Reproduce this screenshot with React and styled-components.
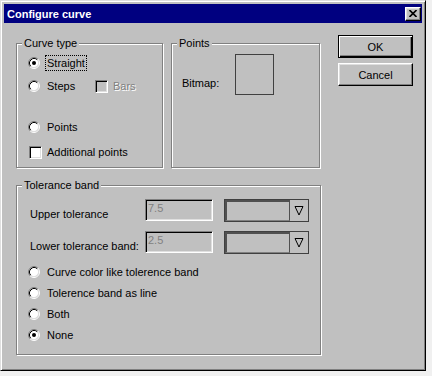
import React from "react";
import styled, { createGlobalStyle, css } from "styled-components";

const GlobalStyle = createGlobalStyle`
  body {
    margin: 0;
    background: #f0f0f0;
    font-family: "Liberation Sans", Arial, sans-serif;
    font-size: 11px;
    color: #000;
  }
`;

const Window = styled.div`
  box-sizing: border-box;
  width: 426px;
  height: 371px;
  background: #c0c0c0;
  border: 1px solid;
  border-color: #dfdfdf #000 #000 #dfdfdf;
  box-shadow: inset 1px 1px 0 #fff, inset -1px -1px 0 #808080;
  padding: 3px;
  display: flex;
  flex-direction: column;
`;

const TitleBar = styled.div`
  height: 19px;
  background: #000080;
  color: #fff;
  font-weight: bold;
  display: flex;
  align-items: center;
  justify-content: space-between;
  padding: 0 1px 0 3px;
`;

const CloseButton = styled.div`
  box-sizing: border-box;
  width: 16px;
  height: 14px;
  background: #c0c0c0;
  border: 1px solid;
  border-color: #fff #000 #000 #fff;
  box-shadow: inset -1px -1px 0 #808080, inset 1px 1px 0 #dfdfdf;
  display: flex;
  align-items: center;
  justify-content: center;
`;

const Body = styled.div`
  display: flex;
  padding: 12px 0 0 12px;
`;

const LeftColumn = styled.div`
  margin-top: 8px;
  width: 305px;
`;

const TopRow = styled.div`
  display: flex;
  gap: 8px;
`;

const Group = styled.div`
  position: relative;
  box-sizing: border-box;
  width: ${(p) => p.w}px;
  height: ${(p) => p.h}px;
  margin-top: ${(p) => p.top || 0}px;
  border: 1px solid #808080;
  box-shadow: inset 1px 1px 0 #fff, 1px 1px 0 #fff;
`;

const Legend = styled.span`
  position: absolute;
  top: -7px;
  left: 5px;
  padding: 0 2px;
  line-height: 13px;
  background: #c0c0c0;
`;

const GroupContent = styled.div`
  display: flex;
  flex-direction: column;
  padding: ${(p) => p.pad};
`;

const Row = styled.div`
  display: flex;
  align-items: center;
  height: 16px;
  margin-top: ${(p) => p.gap || 0}px;
  margin-left: ${(p) => p.indent || 0}px;
  width: ${(p) => (p.w ? `${p.w}px` : "auto")};
  flex-shrink: 0;
`;

const Label = styled.span`
  margin-left: ${(p) => p.gap ?? 5}px;
  padding: 0 1px;
  line-height: 14px;
  white-space: nowrap;
  border: 1px ${(p) => (p.focus ? "dotted #000" : "solid transparent")};
  ${(p) =>
    p.disabled &&
    css`
      color: #808080;
      text-shadow: 1px 1px 0 #fff;
    `}
`;

const RadioSvg = styled.svg`
  flex-shrink: 0;
  display: block;
`;

const CheckBox = styled.div`
  box-sizing: border-box;
  flex-shrink: 0;
  width: 13px;
  height: 13px;
  border: 1px solid;
  border-color: #808080 #fff #fff #808080;
  box-shadow: inset 1px 1px 0 #000, inset -1px -1px 0 #dfdfdf;
  background: ${(p) => (p.disabled ? "#c0c0c0" : "#fff")};
`;

const BitmapRow = styled.div`
  display: flex;
  align-items: flex-start;
  padding: 10px 0 0 10px;
`;

const BitmapLabel = styled.span`
  width: 53px;
  margin-top: 23px;
  line-height: 13px;
`;

const BitmapBox = styled.div`
  box-sizing: border-box;
  width: 39px;
  height: 41px;
  border: 1px solid #404040;
`;

const FieldGrid = styled.div`
  display: grid;
  grid-template-columns: 115px 79px 85px;
  grid-auto-rows: 22px;
  row-gap: 10px;
`;

const FieldLabel = styled.span`
  margin-top: 9px;
  line-height: 13px;
  white-space: nowrap;
`;

const Input = styled.div`
  box-sizing: border-box;
  width: 68px;
  height: 22px;
  border: 1px solid;
  border-color: #808080 #fff #fff #808080;
  box-shadow: inset 1px 1px 0 #000, inset -1px -1px 0 #dfdfdf;
  background: #c0c0c0;
  color: #808080;
  padding: 2px 0 0 2px;
  line-height: 13px;
`;

const Combo = styled.div`
  box-sizing: border-box;
  width: 85px;
  height: 23px;
  border: 1px solid #404040;
  display: flex;
`;

const ComboField = styled.div`
  flex: 1;
  border-top: 2px solid #505050;
  border-left: 2px solid #505050;
  border-right: 1px solid #505050;
  border-bottom: 1px solid #808080;
`;

const ComboArrow = styled.div`
  width: 18px;
  display: flex;
  align-items: center;
  justify-content: center;
`;

const RadioList = styled.div`
  display: flex;
  flex-direction: column;
  gap: 5px;
  margin: 11px 0 0 -2px;
`;

const ButtonColumn = styled.div`
  display: flex;
  flex-direction: column;
  gap: 5px;
  margin-left: 17px;
`;

const Button = styled.div`
  box-sizing: border-box;
  width: 75px;
  height: 23px;
  display: flex;
  align-items: center;
  justify-content: center;
  border: 1px solid;
  ${(p) =>
    p.primary
      ? css`
          border-color: #000;
          box-shadow: inset 1px 1px 0 #fff, inset -1px -1px 0 #000,
            inset -2px -2px 0 #808080;
        `
      : css`
          border-color: #fff #000 #000 #fff;
          box-shadow: inset -1px -1px 0 #808080, inset 1px 1px 0 #dfdfdf;
        `}
`;

const Radio = ({ checked }) => (
  <RadioSvg width="12" height="12" viewBox="0 0 12 12">
    <circle cx="6" cy="6" r="4.5" fill="#fff" />
    <path d="M2.11 9.89A5.5 5.5 0 0 1 9.89 2.11" stroke="#808080" fill="none" />
    <path d="M9.89 2.11A5.5 5.5 0 0 1 2.11 9.89" stroke="#fff" fill="none" />
    <path d="M2.82 9.18A4.5 4.5 0 0 1 9.18 2.82" stroke="#000" fill="none" />
    <path d="M9.18 2.82A4.5 4.5 0 0 1 2.82 9.18" stroke="#dfdfdf" fill="none" />
    {checked && <circle cx="6" cy="6" r="2" fill="#000" />}
  </RadioSvg>
);

const RadioOption = ({ label, checked, focus, gap, w }) => (
  <Row gap={gap} w={w}>
    <Radio checked={checked} />
    <Label focus={focus}>{label}</Label>
  </Row>
);

const CheckOption = ({ label, disabled, gap, indent }) => (
  <Row gap={gap} indent={indent}>
    <CheckBox disabled={disabled} />
    <Label gap={3} disabled={disabled}>
      {label}
    </Label>
  </Row>
);

const ComboBox = () => (
  <Combo>
    <ComboField />
    <ComboArrow>
      <svg width="10" height="11" viewBox="0 0 10 11">
        <path d="M1 1.5H9L5 10Z" fill="none" stroke="#000" />
      </svg>
    </ComboArrow>
  </Combo>
);

export default function App() {
  return (
    <>
      <GlobalStyle />
      <Window>
        <TitleBar>
          <span>Configure curve</span>
          <CloseButton>
            <svg width="8" height="7" viewBox="0 0 8 7">
              <path d="M0.5 0L7.5 7M7.5 0L0.5 7" stroke="#000" strokeWidth="1.6" />
            </svg>
          </CloseButton>
        </TitleBar>
        <Body>
          <LeftColumn>
            <TopRow>
              <Group w={147} h={125}>
                <Legend>Curve type</Legend>
                <GroupContent pad="11px 0 0 11px">
                  <RadioOption label="Straight" checked focus />
                  <Row gap={7}>
                    <RadioOption label="Steps" w={67} />
                    <CheckOption label="Bars" disabled />
                  </Row>
                  <RadioOption label="Points" gap={25} />
                  <CheckOption label="Additional points" gap={9} indent={1} />
                </GroupContent>
              </Group>
              <Group w={149} h={125}>
                <Legend>Points</Legend>
                <BitmapRow>
                  <BitmapLabel>Bitmap:</BitmapLabel>
                  <BitmapBox />
                </BitmapRow>
              </Group>
            </TopRow>
            <Group w={305} h={170} top={17}>
              <Legend>Tolerance band</Legend>
              <GroupContent pad="13px 0 0 13px">
                <FieldGrid>
                  <FieldLabel>Upper tolerance</FieldLabel>
                  <Input>7.5</Input>
                  <ComboBox />
                  <FieldLabel>Lower tolerance band:</FieldLabel>
                  <Input>2.5</Input>
                  <ComboBox />
                </FieldGrid>
                <RadioList>
                  <RadioOption label="Curve color like tolerence band" />
                  <RadioOption label="Tolerence band as line" />
                  <RadioOption label="Both" />
                  <RadioOption label="None" checked />
                </RadioList>
              </GroupContent>
            </Group>
          </LeftColumn>
          <ButtonColumn>
            <Button primary>OK</Button>
            <Button>Cancel</Button>
          </ButtonColumn>
        </Body>
      </Window>
    </>
  );
}
